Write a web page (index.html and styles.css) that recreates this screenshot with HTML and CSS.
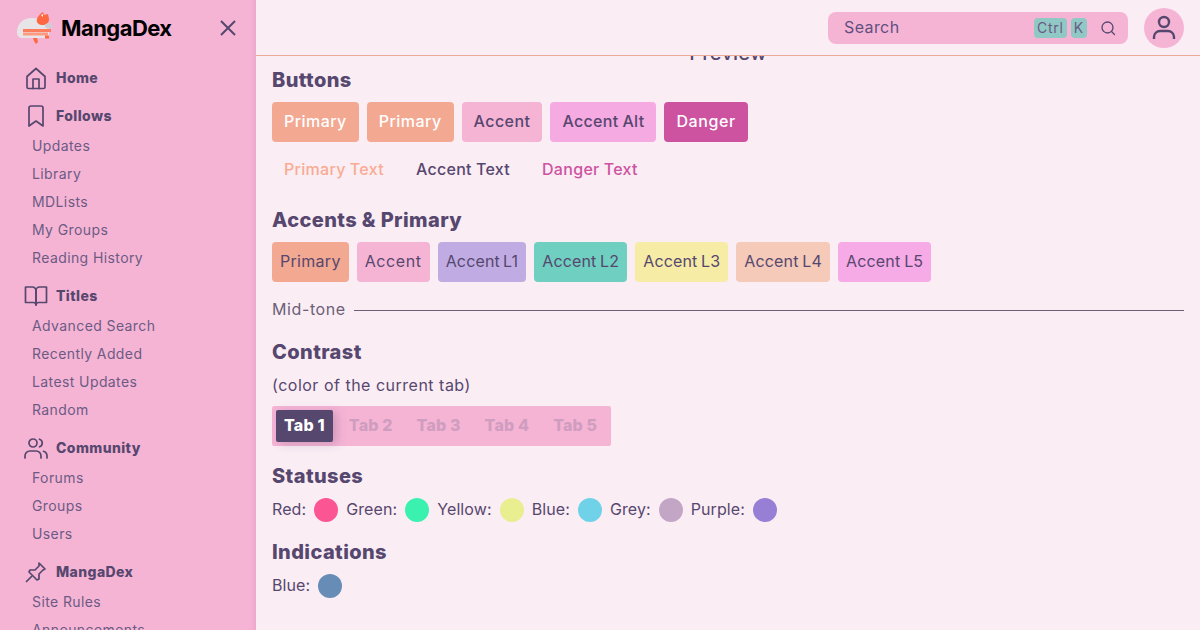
FILE: index.html
```html
<!DOCTYPE html>
<html lang="en">
<head>
<meta charset="utf-8">
<title>MangaDex</title>
<link rel="stylesheet" href="styles.css">
</head>
<body>
<aside class="sidebar">
  <div class="brand">
    <svg class="logo" width="36" height="32" viewBox="0 0 36 32"><path d="M0 20C0 12 6 6 15 6c7 0 13 3 17 7v13H6c-4 0-6-2-6-6z" fill="#e8e5e8"/><path d="M20 7c1-3 4-6 6-7l1 3 4-1 1 5c0 4-3 6-6 6-4 0-7-2-6-6z" fill="#ff6740"/><path d="M24 3l2-1v3z" fill="#fff"/><path d="M28 12l6-1 2 4-5 2-3-2z" fill="#cfcdd3"/><rect x="6" y="17" width="28" height="3" fill="#ff7c5e"/><rect x="6" y="20.500" width="25" height="3" fill="#ff9a80"/><path d="M16 26h4l1 4-2 2-2-3z" fill="#ff6740"/><rect x="28" y="23.500" width="4" height="3" fill="#ff6740"/></svg>
    <span class="wordmark">MangaDex</span>
    <svg class="close" width="24" height="24" viewBox="0 0 24 24"><path d="M5 5l14 14M19 5L5 19"/></svg>
  </div>
  <div class="nav-title home-row">
    <svg class="ico" viewBox="0 0 24 24"><path d="M3 10.5 12 2.500l9 8V21a1.500 1.500 0 0 1-1.500 1.500h-15A1.500 1.500 0 0 1 3 21z"/><path d="M9 22.500V13h6v9.500"/></svg>Home
  </div>
  <nav class="group">
    <div class="nav-title"><svg class="ico" viewBox="0 0 24 24"><path d="M19 22l-7-5-7 5V4a2 2 0 0 1 2-2h10a2 2 0 0 1 2 2z"/></svg>Follows</div>
    <a class="nav-item">Updates</a><a class="nav-item">Library</a><a class="nav-item">MDLists</a><a class="nav-item">My Groups</a><a class="nav-item">Reading History</a>
  </nav>
  <nav class="group">
    <div class="nav-title"><svg class="ico" viewBox="0 0 24 24"><path d="M1.500 3h7a3.500 3.500 0 0 1 3.500 3.500V21a2.500 2.500 0 0 0-2.500-2.500h-8z"/><path d="M22.500 3h-7A3.500 3.500 0 0 0 12 6.500V21a2.500 2.500 0 0 1 2.500-2.500h8z"/></svg>Titles</div>
    <a class="nav-item">Advanced Search</a><a class="nav-item">Recently Added</a><a class="nav-item">Latest Updates</a><a class="nav-item">Random</a>
  </nav>
  <nav class="group">
    <div class="nav-title"><svg class="ico" viewBox="0 0 24 24"><circle cx="9" cy="7" r="4"/><path d="M1 22v-2a5 5 0 0 1 5-5h6a5 5 0 0 1 5 5v2"/><path d="M15.500 3.200a4 4 0 0 1 0 7.600"/><path d="M23 22v-2a5 5 0 0 0-3.500-4.700"/></svg>Community</div>
    <a class="nav-item">Forums</a><a class="nav-item">Groups</a><a class="nav-item">Users</a>
  </nav>
  <nav class="group">
    <div class="nav-title"><svg class="ico" viewBox="0 0 24 24"><path d="M15 3l6 6-2 1-4 4v5l-2 1-8-8 1-2h5l4-4z"/><path d="M7.500 16.500 2.500 21.500"/></svg>MangaDex</div>
    <a class="nav-item">Site Rules</a><a class="nav-item">Announcements</a>
  </nav>
</aside>
<div class="page">
  <header class="topbar">
    <div class="search">
      <span class="search-label">Search</span>
      <kbd class="key">Ctrl</kbd><kbd class="key">K</kbd>
      <svg class="search-ico" width="16" height="16" viewBox="0 0 16 16"><circle cx="7.500" cy="7.500" r="5.500"/><path d="M11.500 11.500 14.500 14.500"/></svg>
    </div>
    <div class="avatar"><svg width="32" height="32" viewBox="0 0 32 32"><circle cx="16" cy="10" r="5"/><path d="M6 27v-2a6 6 0 0 1 6-6h8a6 6 0 0 1 6 6v2"/></svg></div>
  </header>
  <main class="content">
    <div class="preview">Preview</div>
    <h2 class="heading">Buttons</h2>
    <div class="row">
      <button class="btn primary">Primary</button><button class="btn primary">Primary</button><button class="btn accent">Accent</button><button class="btn accent-alt">Accent Alt</button><button class="btn danger">Danger</button>
    </div>
    <div class="row text-row">
      <button class="btn text-primary">Primary Text</button><button class="btn text-accent">Accent Text</button><button class="btn text-danger">Danger Text</button>
    </div>
    <h2 class="heading">Accents &amp; Primary</h2>
    <div class="row">
      <span class="chip c-primary">Primary</span><span class="chip c-accent">Accent</span><span class="chip c-l1">Accent L1</span><span class="chip c-l2">Accent L2</span><span class="chip c-l3">Accent L3</span><span class="chip c-l4">Accent L4</span><span class="chip c-l5">Accent L5</span>
    </div>
    <div class="midtone"><span>Mid-tone</span><i class="midline"></i></div>
    <h2 class="heading">Contrast</h2>
    <p class="note">(color of the current tab)</p>
    <div class="tabs">
      <span class="tab active">Tab 1</span><span class="tab">Tab 2</span><span class="tab">Tab 3</span><span class="tab">Tab 4</span><span class="tab">Tab 5</span>
    </div>
    <h2 class="heading">Statuses</h2>
    <div class="statuses">
      <span>Red:</span><i class="dot red"></i><span>Green:</span><i class="dot green"></i><span>Yellow:</span><i class="dot yellow"></i><span>Blue:</span><i class="dot blue"></i><span>Grey:</span><i class="dot grey"></i><span>Purple:</span><i class="dot purple"></i>
    </div>
    <h2 class="heading">Indications</h2>
    <div class="statuses">
      <span>Blue:</span><i class="dot indication"></i>
    </div>
  </main>
</div>
</body>
</html>
```
FILE: styles.css
```css
* { box-sizing: border-box; }
html, body { margin: 0; height: 630px; overflow: hidden; }
body {
  display: flex;
  background: #fbedf4;
  color: #56476f;
  font-family: Inter, "Noto Sans", sans-serif;
  font-size: 16px;
}
.sidebar {
  width: 256px;
  flex: none;
  height: 630px;
  overflow: hidden;
  padding: 0 16px;
  background: #f6b4d5;
  box-shadow: inset -6px 0 6px -6px rgba(200, 110, 160, .35);
}
.brand {
  display: flex;
  align-items: center;
  height: 56px;
  margin: 0 -16px 6px 0;
  padding: 0 16px 0 0;
}
.logo { margin: 0 8px 0 1px; }
.wordmark {
  font-size: 22px;
  font-weight: 700;
  letter-spacing: -.55px;
  color: #000;
}
.close { margin-left: auto; fill: none; stroke: #56476f; stroke-width: 2; }
.nav-title {
  display: flex;
  align-items: center;
  gap: 8px;
  height: 32px;
  padding: 0 0 2px 8px;
  font-size: 14px;
  font-weight: 800;
  letter-spacing: .4px;
}
.home-row { margin-bottom: 6px; }
.ico {
  width: 24px;
  height: 24px;
  margin-top: 2px;
  fill: none;
  stroke: #56476f;
  stroke-width: 1.700;
  stroke-linejoin: round;
  stroke-linecap: round;
}
.group { margin-bottom: 8px; }
.nav-item {
  display: flex;
  align-items: center;
  height: 28px;
  padding: 0 0 2px 16px;
  font-size: 14px;
  letter-spacing: .4px;
  color: #6b5b84;
}
.page { flex: 1; min-width: 0; height: 630px; display: flex; flex-direction: column; }
.topbar {
  flex: none;
  height: 56px;
  display: flex;
  justify-content: flex-end;
  align-items: center;
  gap: 16px;
  padding: 0 16px;
  border-bottom: 1px solid #eeaa98;
}
.search {
  width: 300px;
  height: 32px;
  display: flex;
  align-items: center;
  gap: 4px;
  padding: 0 12px 0 16px;
  border-radius: 8px;
  background: #f6b4d5;
}
.search-label { margin: -2px auto 0 0; font-size: 16px; letter-spacing: .4px; color: #5f5080; }
.key {
  height: 20px;
  padding: 0 3px;
  border-radius: 4px;
  background: #90c8c5;
  font: 400 14px/20px Inter, sans-serif;
  letter-spacing: .8px;
  color: #6b5b84;
}
.search-ico { margin-left: 9px; fill: none; stroke: #56476f; stroke-width: 1.300; stroke-linecap: round; }
.avatar {
  width: 40px;
  height: 40px;
  display: flex;
  align-items: center;
  justify-content: center;
  border-radius: 50%;
  background: #f6b4d5;
}
.avatar svg { fill: none; stroke: #56476f; stroke-width: 2.400; }
.content { flex: 1; min-height: 0; overflow: hidden; padding: 0 16px; }
.preview {
  margin: -15px 0 -15px;
  height: 24px;
  line-height: 24px;
  text-align: center;
  font-size: 20px;
  font-weight: 500;
  letter-spacing: .2px;
}
.heading {
  height: 30px;
  margin: 15px 0 7px;
  font-size: 20px;
  font-weight: 800;
  line-height: 30px;
  letter-spacing: .4px;
}
.row { display: flex; gap: 8px; height: 40px; }
.text-row { margin-top: 8px; }
.btn {
  height: 40px;
  padding: 0 12px 2px;
  border: 0;
  border-radius: 4px;
  background: none;
  font: 500 16px Inter, sans-serif;
  letter-spacing: .3px;
  word-spacing: -.5px;
  color: #56476f;
}
.primary { background: #f3a892; color: #fff; letter-spacing: .45px; }
.accent { background: #f6b4d5; letter-spacing: .45px; }
.accent-alt { background: #f6aae2; }
.danger { background: #cd53a1; color: #fff; letter-spacing: .6px; }
.text-primary { color: #f8ab92; }
.text-danger { color: #cd53a1; }
.chip {
  height: 40px;
  padding: 0 8px 2px;
  display: flex;
  align-items: center;
  border-radius: 4px;
  letter-spacing: .15px;
  word-spacing: -1px;
}
.c-primary { background: #f3a892; letter-spacing: .3px; }
.c-accent { background: #f6b4d5; letter-spacing: .6px; }
.c-l1 { background: #c0ace2; letter-spacing: .15px; word-spacing: -1.500px; }
.c-l2 { background: #6fcfc0; }
.c-l3 { background: #f6eca6; }
.c-l4 { background: #f5cab8; }
.c-l5 { background: #f6aae6; letter-spacing: .2px; }
.midtone {
  height: 24px;
  margin-top: 16px;
  display: flex;
  align-items: center;
  gap: 8px;
  letter-spacing: .6px;
  color: #6b6077;
}
.midtone span { margin-bottom: 2px; }
.midline { flex: 1; height: 1px; background: #6b6077; }
.note { height: 24px; margin: -1px 0 9px; line-height: 24px; letter-spacing: .5px; }
.tabs {
  display: flex;
  align-items: center;
  width: 339px;
  height: 40px;
  padding: 0 4px;
  border-radius: 2px;
  background: #f6b4d5;
}
.tab {
  height: 32px;
  display: flex;
  align-items: center;
  padding: 0 8px 2px;
  margin-right: 8px;
  border-radius: 2px;
  font-weight: 800;
  letter-spacing: .15px;
  color: #cf9dbf;
}
.tab:last-child { margin-right: 0; }
.tab.active { background: #56476f; color: #fff; letter-spacing: .2px; box-shadow: 4px 2px 10px rgba(86, 71, 111, .25); }
.statuses { display: flex; align-items: center; gap: 8px; height: 24px; letter-spacing: .1px; }
.statuses span { margin-bottom: 2px; }
.dot { width: 24px; height: 24px; border-radius: 50%; }
.red { background: #fb5593; }
.green { background: #3bf1b0; }
.yellow { background: #e9ee90; }
.blue { background: #6fd2e9; }
.grey { background: #c3a6c6; }
.purple { background: #977fd5; }
.indication { background: #678db7; }
```
